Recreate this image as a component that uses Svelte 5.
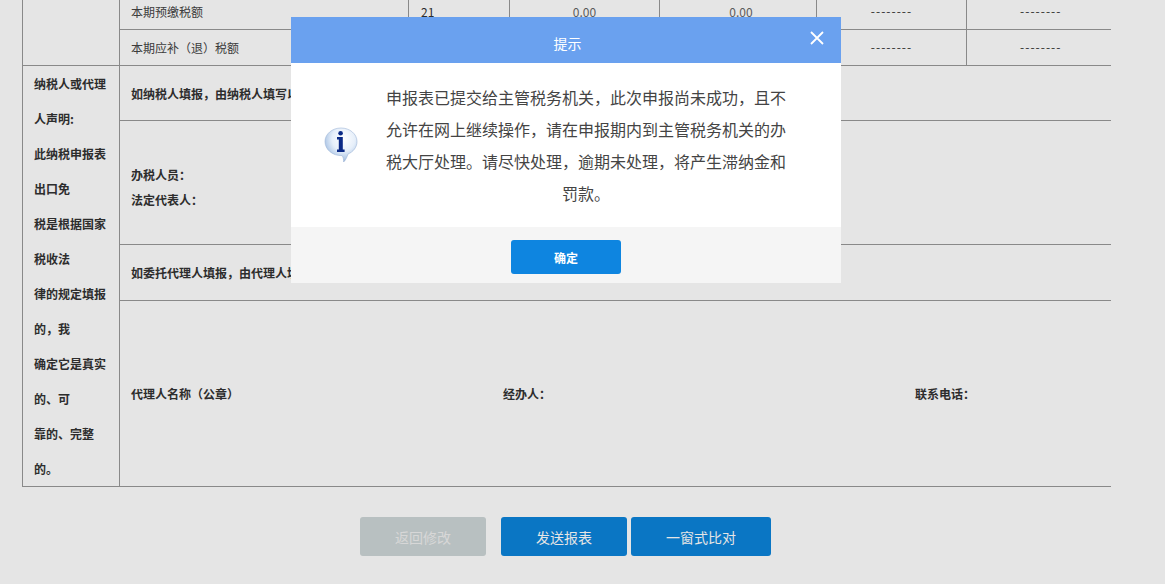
<script>
  const statement = [
    '纳税人或代理', '人声明:', '此纳税申报表', '出口免', '税是根据国家', '税收法',
    '律的规定填报', '的，我', '确定它是真实', '的、可', '靠的、完整', '的。'
  ]
  const taxRows = [
    { label: '本期预缴税额', line: '21' },
    { label: '本期应补（退）税额', line: '' }
  ]
</script>

<div class="page">
  <table class="tax-table">
    <colgroup>
      <col style="width: 97px" />
      <col style="width: 289px" />
      <col style="width: 101px" />
      <col style="width: 150px" />
      <col style="width: 157px" />
      <col style="width: 150px" />
      <col style="width: 144px" />
    </colgroup>
    <tbody>
      {#each taxRows as row, i}
        <tr class="tax-row">
          {#if i === 0}
            <td rowspan="2"></td>
          {/if}
          <td class="label">{row.label}</td>
          <td class="line">{row.line}</td>
          <td class="num">0.00</td>
          <td class="num shifted">0.00</td>
          <td class="dash">--------</td>
          <td class="dash last">--------</td>
        </tr>
      {/each}
      <tr class="row-a">
        <td class="statement" rowspan="4">
          {#each statement as text}
            <p>{text}</p>
          {/each}
        </td>
        <td class="strong" colspan="6">如纳税人填报，由纳税人填写以下各栏</td>
      </tr>
      <tr class="row-b">
        <td class="strong signers" colspan="6">
          <p>办税人员：</p>
          <p>法定代表人：</p>
        </td>
      </tr>
      <tr class="row-c">
        <td class="strong" colspan="6">如委托代理人填报，由代理人填写以下各栏</td>
      </tr>
      <tr class="row-d">
        <td class="strong" colspan="6">
          <div class="agent">
            <span class="agent-name">代理人名称（公章）</span>
            <span class="agent-person">经办人：</span>
            <span>联系电话：</span>
          </div>
        </td>
      </tr>
    </tbody>
  </table>

  <div class="actions">
    <button class="btn disabled">返回修改</button>
    <button class="btn">发送报表</button>
    <button class="btn wide">一窗式比对</button>
  </div>
</div>

<div class="overlay"></div>

<div class="dialog">
  <div class="dialog-head">
    <span>提示</span>
    <button class="close" aria-label="关闭">
      <svg width="14" height="14" viewBox="0 0 14 14">
        <path d="M1 1 L13 13 M13 1 L1 13" stroke="#fff" stroke-width="1.8" fill="none" />
      </svg>
    </button>
  </div>
  <div class="dialog-body">
    <svg class="info" width="34" height="36" viewBox="0 0 34 36">
      <defs>
        <radialGradient id="bubble" cx="0.58" cy="0.32" r="0.72">
          <stop offset="0" stop-color="#ffffff" />
          <stop offset="0.5" stop-color="#e6effa" />
          <stop offset="0.8" stop-color="#b4cbe8" />
          <stop offset="1" stop-color="#7d9cc6" />
        </radialGradient>
      </defs>
      <path
        d="M17 1 C25.8 1 33 7 33 14.5 C33 20.4 29 25 24 27 C23 30 21.6 33.4 19.6 35 C19.8 32.6 19.2 30.4 18.2 28.6 C8.6 29 1 22.6 1 14.5 C1 7 8.2 1 17 1 Z"
        fill="url(#bubble)"
        stroke="#9db6d6"
        stroke-width="0.6"
      />
      <circle cx="16.6" cy="6.2" r="2.3" fill="#0b2a86" />
      <path
        d="M13 10 H18.8 V22.6 H20.6 V25 H13 V22.6 H14.8 V12.4 H13 Z"
        fill="#0b2a86"
      />
    </svg>
    <p class="message">
      申报表已提交给主管税务机关，此次申报尚未成功，且不允许在网上继续操作，请在申报期内到主管税务机关的办税大厅处理。请尽快处理，逾期未处理，将产生滞纳金和罚款。
    </p>
  </div>
  <div class="dialog-foot">
    <button class="ok">确定</button>
  </div>
</div>

<style>
  :global(body) {
    margin: 0;
    background: #fff;
    overflow: hidden;
    font-family: "Noto Sans CJK SC", "Liberation Sans", sans-serif;
  }

  .page {
    height: 584px;
    padding-left: 22px;
    color: #333;
    font-size: 12px;
  }

  p {
    margin: 0;
  }

  .tax-table {
    width: 1088px;
    margin-top: -7px;
    border-collapse: collapse;
    table-layout: fixed;
    border-left: 1px solid #999;
    border-bottom: 1px solid #999;
  }

  .tax-table td {
    padding: 0 11px;
    border-top: 1px solid #999;
    border-left: 1px solid #999;
    vertical-align: middle;
  }

  .tax-row {
    height: 36px;
  }

  .row-a {
    height: 55px;
  }

  .row-b {
    height: 124px;
  }

  .row-c {
    height: 56px;
  }

  .row-d {
    height: 186px;
  }

  .label {
    color: #444;
  }

  .tax-table .line {
    padding-left: 12px;
  }

  .num {
    text-align: center;
    color: #666;
  }

  .tax-table .num.shifted {
    padding-left: 16px;
    padding-right: 10px;
  }

  .tax-table .dash {
    text-align: center;
    letter-spacing: 1px;
    padding-bottom: 2px;
  }

  .tax-table .dash.last {
    padding-left: 15px;
    padding-right: 11px;
  }

  .strong {
    font-weight: 700;
  }

  .tax-table .statement {
    padding: 0 11px;
    font-weight: 700;
    line-height: 35px;
    white-space: nowrap;
  }

  .tax-table .signers {
    line-height: 25px;
    padding-top: 8px;
  }

  .agent {
    display: flex;
  }

  .agent-name {
    width: 372px;
  }

  .agent-person {
    width: 412px;
  }

  .actions {
    display: flex;
    width: 1087px;
    justify-content: center;
    margin-top: 30px;
  }

  .btn {
    width: 126px;
    height: 39px;
    margin-left: 4px;
    border: 0;
    border-radius: 3px;
    background: #0c84db;
    color: #fff;
    font-family: inherit;
    font-size: 14px;
  }

  .btn.disabled {
    margin: 0 11px 0 0;
    background: #cdd6d7;
    color: #f0f0f0;
  }

  .btn.wide {
    width: 140px;
  }

  .overlay {
    position: fixed;
    inset: 0;
    background: rgba(0, 0, 0, 0.1);
  }

  .dialog {
    position: fixed;
    top: 17px;
    left: 291px;
    width: 550px;
    background: #fff;
  }

  .dialog-head {
    position: relative;
    height: 46px;
    display: flex;
    align-items: center;
    justify-content: center;
    padding: 6px 0 0 3px;
    box-sizing: border-box;
    background: #6aa1ef;
    color: #fff;
    font-size: 14px;
  }

  .close {
    position: absolute;
    top: 14px;
    right: 17px;
    width: 14px;
    height: 14px;
    padding: 0;
    border: 0;
    background: none;
    line-height: 0;
  }

  .dialog-body {
    height: 164px;
    display: flex;
    align-items: center;
    padding-left: 33px;
    box-sizing: border-box;
  }

  .info {
    flex: none;
    margin-right: 28px;
    margin-bottom: 1px;
  }

  .message {
    width: 400px;
    font-size: 16px;
    line-height: 32px;
    text-align: center;
    color: #444;
  }

  .dialog-foot {
    height: 56px;
    display: flex;
    justify-content: center;
    padding-top: 13px;
    box-sizing: border-box;
    background: #f5f5f5;
  }

  .ok {
    width: 110px;
    height: 34px;
    border: 0;
    border-radius: 3px;
    background: #0e85e0;
    color: #fff;
    font-family: inherit;
    font-size: 12px;
    font-weight: 700;
  }
</style>
